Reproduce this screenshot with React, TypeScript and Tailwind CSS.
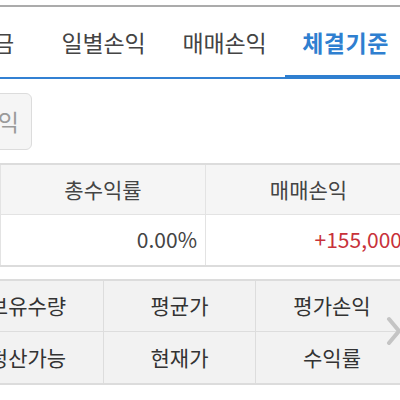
import React from "react";

const font = {
  fontFamily: '"Noto Sans CJK KR", "Noto Sans", Roboto, sans-serif',
};

const tabs = ["예수금", "일별손익", "매매손익", "체결기준"];

const App = () => {
  return (
    <div
      className="relative w-[400px] h-[400px] overflow-hidden bg-white"
      style={font}
    >
      {/* TOP LINE */}
      <div className="mt-[5px] h-[2px] bg-[#ababab]" />

      {/* TABS */}
      <div className="relative border-b-2 border-[#3281d3]">
        <div className="flex ml-[-78px]">
          {tabs.map((t, i) => {
            const active = i === tabs.length - 1;
            return (
              <div
                key={t}
                className="relative w-[121px] h-[70px] shrink-0 flex items-center justify-center"
              >
                <span
                  className={
                    active
                      ? "text-[23px] font-bold text-[#2f7fd0] tracking-[0.5px]"
                      : "text-[23px] text-[#444] tracking-[-0.2px]"
                  }
                >
                  {t}
                </span>
                {active && (
                  <div className="absolute left-0 right-[-10px] bottom-[-2px] h-[4px] bg-[#2f7fd0]" />
                )}
              </div>
            );
          })}
        </div>
      </div>

      {/* BUTTON */}
      <div className="mt-[14px] ml-[-60px] w-[92px] h-[57px] rounded-[6px] border border-[#dcdcdc] bg-[#f5f5f5] flex items-center justify-end pr-[12px]">
        <span className="text-[23px] text-[#9a9a9a]">손익</span>
      </div>

      {/* SUMMARY TABLE */}
      <div className="mt-[13px] border-t-2 border-[#dcdcdc] border-b-2">
        <div className="ml-[-99px] grid grid-cols-[100px_205px_205px] text-[21px]">
          <div className="h-[50px] bg-[#f5f5f5] border-r border-[#e3e3e3] border-b" />
          <div className="h-[50px] bg-[#f5f5f5] border-r border-b border-[#e3e3e3] flex items-center justify-center text-[#444]">
            총수익률
          </div>
          <div className="h-[50px] bg-[#f5f5f5] border-b border-[#e3e3e3] flex items-center justify-center text-[#444]">
            매매손익
          </div>
          <div className="h-[50px] border-r border-[#e3e3e3]" />
          <div className="h-[50px] border-r border-[#e3e3e3] flex items-center justify-end pr-[8px] text-[#444]">
            0.00%
          </div>
          <div className="h-[50px] flex items-center justify-end pr-[9px] text-[#c8323a]">
            +155,000
          </div>
        </div>
      </div>

      {/* DETAIL GRID */}
      <div className="mt-[12px] border-t-2 border-b-2 border-[#dcdcdc] bg-[#f2f2f2]">
        <div className="ml-[-48px] grid grid-cols-[152px_152px_152px] text-[21px] text-[#333]">
          <div className="h-[51px] border-r border-b border-[#dddddd] flex items-center justify-center">
            보유수량
          </div>
          <div className="h-[51px] border-r border-b border-[#dddddd] flex items-center justify-center">
            평균가
          </div>
          <div className="h-[51px] border-b border-[#dddddd] flex items-center justify-center">
            평가손익
          </div>
          <div className="h-[51px] border-r border-[#dddddd] flex items-center justify-center">
            청산가능
          </div>
          <div className="h-[51px] border-r border-[#dddddd] flex items-center justify-center">
            현재가
          </div>
          <div className="h-[51px] flex items-center justify-center">
            수익률
          </div>
        </div>
      </div>

      {/* NEXT ARROW */}
      <svg
        className="absolute left-[386px] top-[316px]"
        width="16"
        height="30"
        viewBox="0 0 16 30"
      >
        <path
          d="M3 3 L13 15 L3 27"
          fill="none"
          stroke="#c4c4c4"
          strokeWidth="4"
          strokeLinecap="round"
          strokeLinejoin="round"
        />
      </svg>
    </div>
  );
};

export default App;
